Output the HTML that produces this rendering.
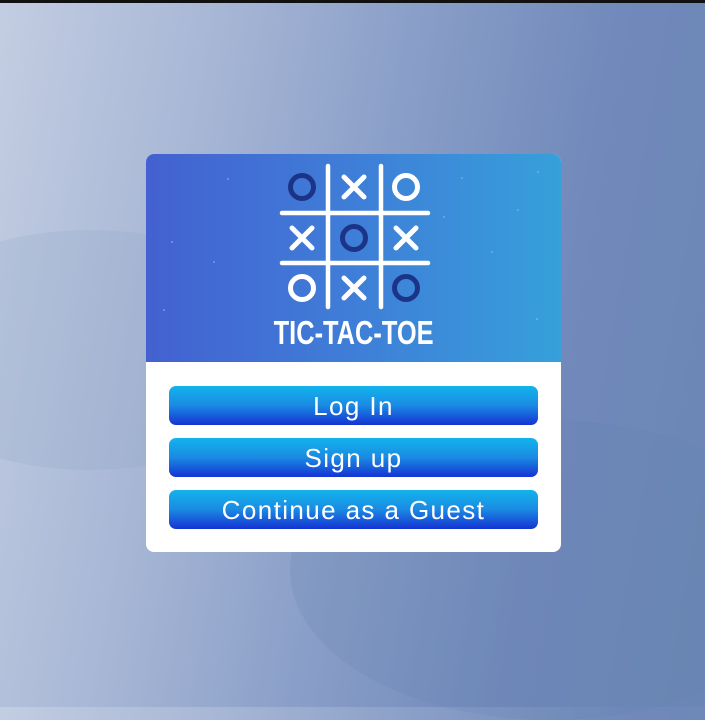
<!DOCTYPE html>
<html><head><style>
html,body{margin:0;padding:0;}
body{width:705px;height:707px;overflow:hidden;position:relative;
background:linear-gradient(100deg,#c3cde2 0%,#a9b8d6 25%,#8a9fc8 50%,#7189bb 75%,#6a86b4 100%);font-family:"Liberation Sans",sans-serif;}
.top{position:absolute;left:0;top:0;width:705px;height:3px;background:#111;}
.blob1{position:absolute;left:-120px;top:230px;width:420px;height:240px;border-radius:50%;background:rgba(140,165,195,0.2);}
.blob2{position:absolute;left:290px;top:420px;width:520px;height:300px;border-radius:50%;background:rgba(100,130,175,0.2);}
.card{position:absolute;left:146px;top:154px;width:415px;height:398px;background:#fff;border-radius:8px;overflow:hidden;}
.head{position:absolute;left:0;top:0;width:415px;height:208px;background:linear-gradient(90deg,#4361d0 0%,#3f7ed8 50%,#36a0da 100%);}
.btn{position:absolute;left:23px;width:369px;height:39px;border-radius:7px;background:linear-gradient(180deg,#12b4ec 0%,#1a8ae3 50%,#1633d3 100%);color:#fff;text-align:center;line-height:41px;font-size:26px;font-weight:300;letter-spacing:1.4px;}
.title{position:absolute;left:0;width:415px;top:160px;text-align:center;color:#fff;font-weight:bold;font-size:33px;transform:scaleX(0.77);transform-origin:208px 0;}
</style></head><body>
<div class="top"></div>
<div class="blob1"></div><div class="blob2"></div>
<div class="card">
<div class="head">
<svg width="415" height="208" style="position:absolute;left:0;top:0">
<g stroke="#fff" stroke-width="4.5" stroke-linecap="round" fill="none">
<line x1="182" y1="12" x2="182" y2="153"/>
<line x1="235" y1="12" x2="235" y2="153"/>
<line x1="136" y1="59" x2="282" y2="59"/>
<line x1="136" y1="109" x2="282" y2="109"/>
</g>
<g stroke-width="5" fill="none">
<circle cx="156" cy="33" r="11.5" stroke="#1c3488"/>
<circle cx="260" cy="33" r="11.5" stroke="#fff"/>
<circle cx="208" cy="84" r="11.5" stroke="#1c3488"/>
<circle cx="156" cy="134" r="11.5" stroke="#fff"/>
<circle cx="260" cy="134" r="11.5" stroke="#1c3488"/>
</g>
<g stroke="#fff" stroke-width="5" stroke-linecap="round">
<path d="M198 23l20 20M218 23l-20 20"/>
<path d="M146 74l20 20M166 74l-20 20"/>
<path d="M250 74l20 20M270 74l-20 20"/>
<path d="M198 124l20 20M218 124l-20 20"/>
</g>
<g fill="#9fb8ee" opacity="0.6">
<circle cx="82" cy="25" r="1"/><circle cx="26" cy="88" r="1"/><circle cx="68" cy="108" r="1"/><circle cx="18" cy="156" r="1"/><circle cx="316" cy="24" r="1"/><circle cx="372" cy="56" r="1"/><circle cx="298" cy="63" r="1"/><circle cx="346" cy="98" r="1"/><circle cx="391" cy="165" r="1"/><circle cx="392" cy="18" r="1"/>
</g>
</svg>
<div class="title">TIC-TAC-TOE</div>
</div>
<div class="btn" style="top:232px">Log In</div>
<div class="btn" style="top:284px">Sign up</div>
<div class="btn" style="top:336px">Continue as a Guest</div>
</div>
</body></html>
